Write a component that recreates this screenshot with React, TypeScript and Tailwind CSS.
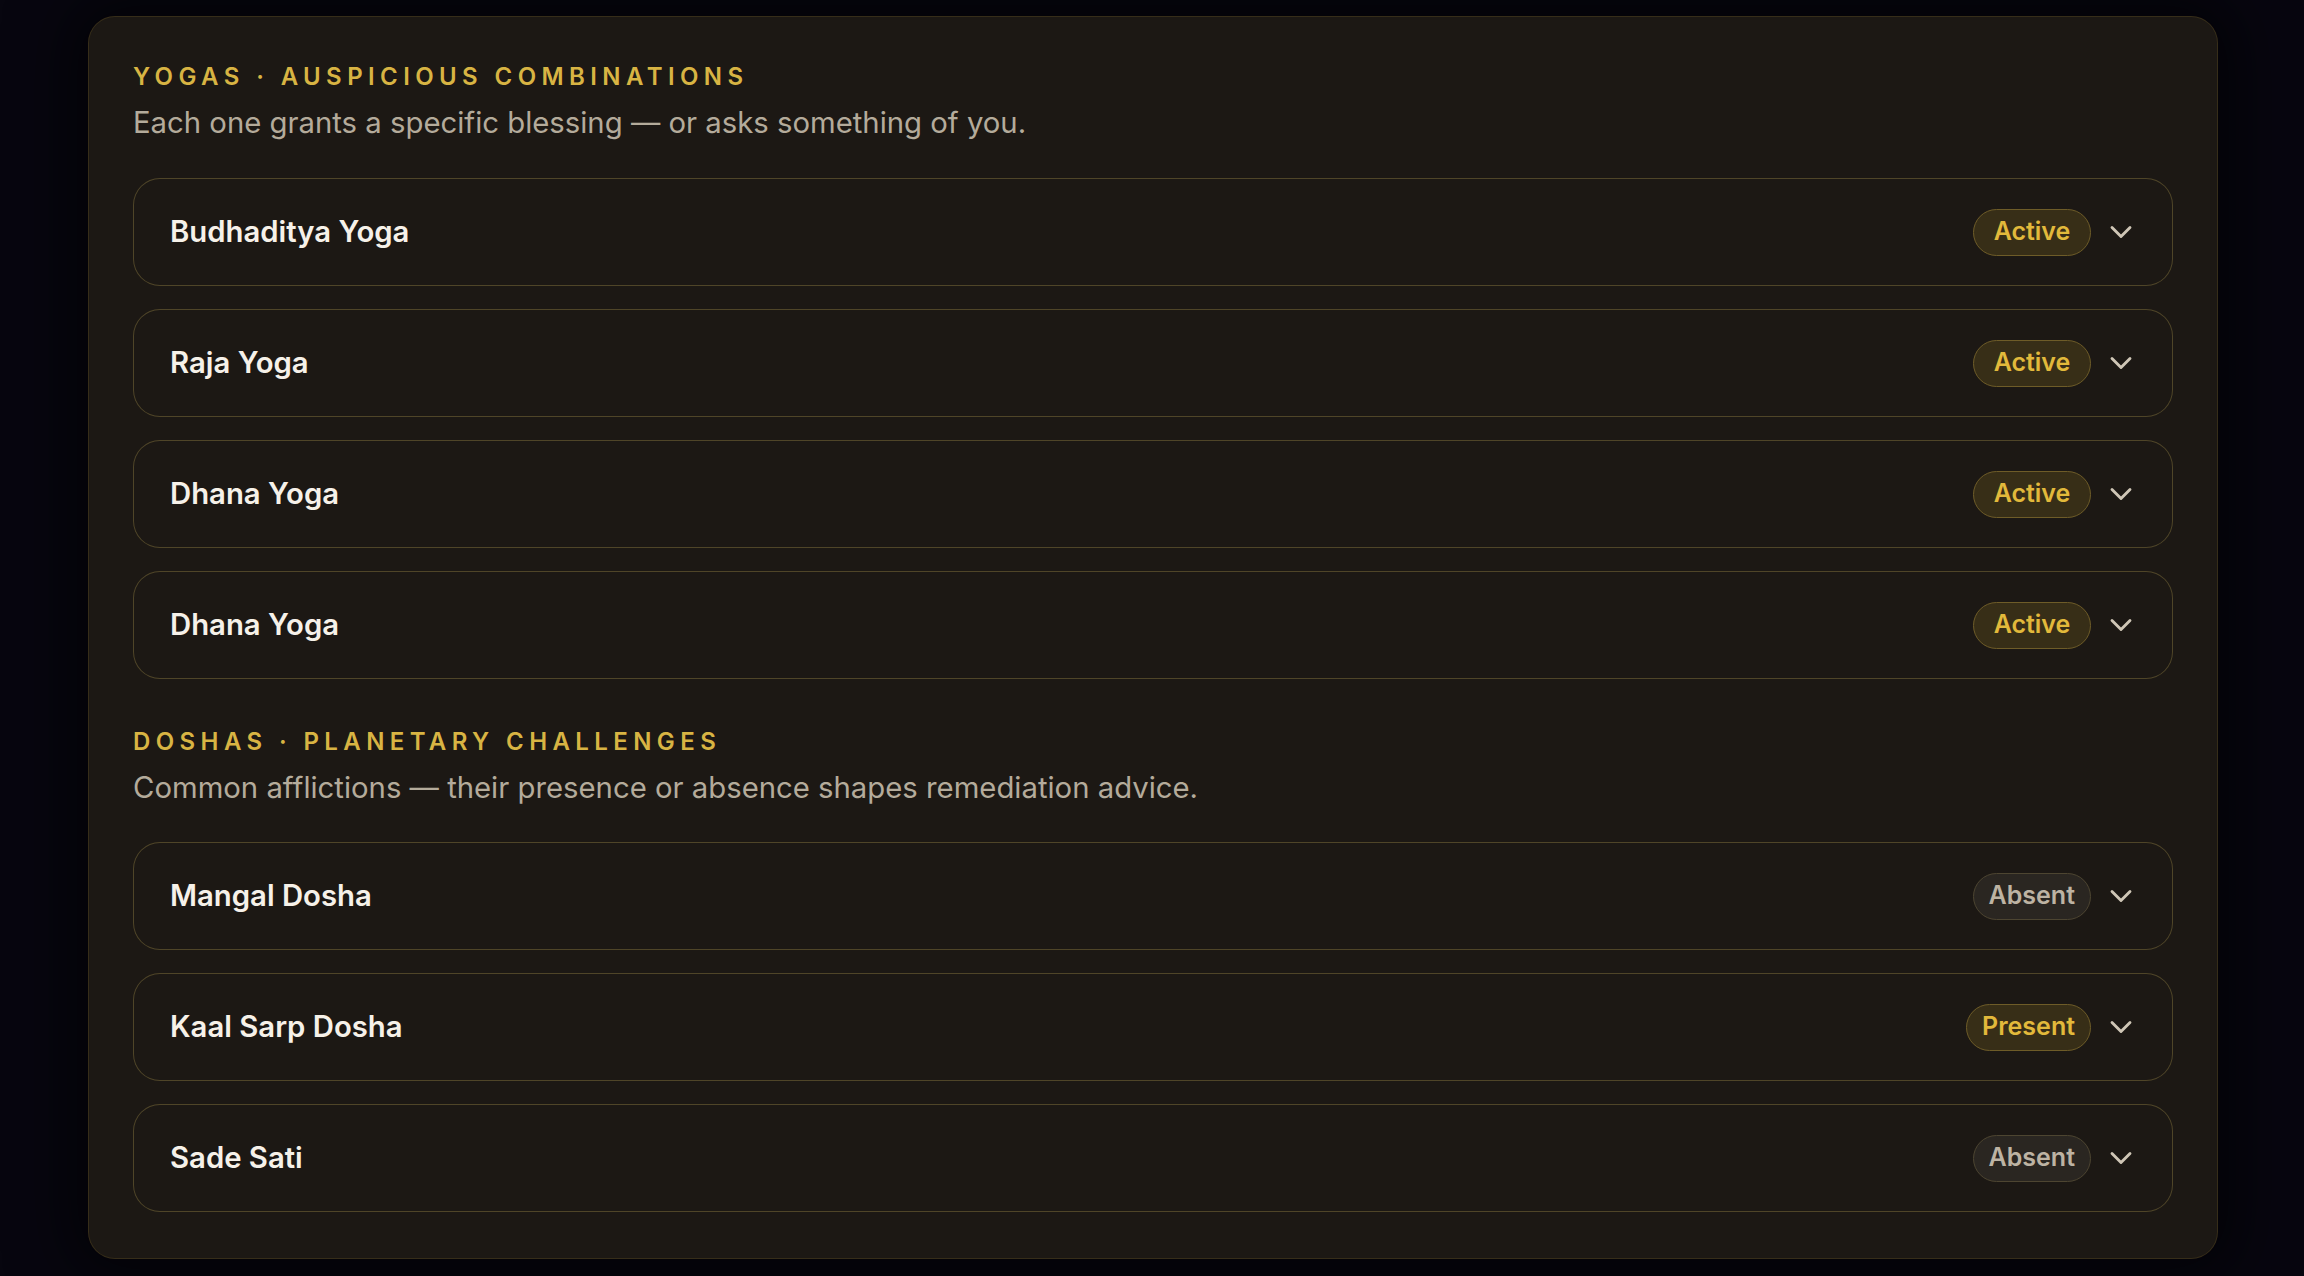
import React from "react";
import { ChevronDown } from "lucide-react";

type Status = "Active" | "Present" | "Absent";

type Item = { name: string; status: Status };

const yogas: Item[] = [
  { name: "Budhaditya Yoga", status: "Active" },
  { name: "Raja Yoga", status: "Active" },
  { name: "Dhana Yoga", status: "Active" },
  { name: "Dhana Yoga", status: "Active" },
];

const doshas: Item[] = [
  { name: "Mangal Dosha", status: "Absent" },
  { name: "Kaal Sarp Dosha", status: "Present" },
  { name: "Sade Sati", status: "Absent" },
];

function Badge({ status }: { status: Status }) {
  const lit = status !== "Absent";
  return (
    <span
      className={
        lit
          ? "flex h-[47px] min-w-[118px] items-center justify-center rounded-full border border-[#6e5c28] bg-[#372e17] px-[15px] text-[25px] font-semibold text-[#e2b93b]"
          : "flex h-[47px] min-w-[118px] items-center justify-center rounded-full border border-[#4d4531] bg-[#2a2621] px-[15px] text-[25px] font-semibold text-[#bdb3a3]"
      }
    >
      {status}
    </span>
  );
}

function Row({ item }: { item: Item }) {
  return (
    <div className="flex h-[108px] items-center justify-between rounded-[27px] border border-[rgba(200,175,90,0.3)] bg-[#1c1814] pl-[36px] pr-[33px]">
      <span className="text-[29.3px] font-semibold text-[#f6f1e9]">{item.name}</span>
      <div className="flex items-center gap-[12px]">
        <Badge status={item.status} />
        <ChevronDown size={36} strokeWidth={1.9} className="text-[#cfc6b6]" />
      </div>
    </div>
  );
}

function Section({
  title,
  blurb,
  items,
  className,
  listGap,
}: {
  title: string;
  blurb: string;
  items: Item[];
  className?: string;
  listGap: string;
}) {
  return (
    <section className={className}>
      <h2 className="text-[24px] font-semibold uppercase leading-[36px] tracking-[0.225em] text-[#d8b443]">
        {title}
      </h2>
      <p className="mt-[8px] text-[29.3px] leading-[40px] text-[#b4ab9b]">{blurb}</p>
      <div className={`flex flex-col gap-[23px] ${listGap}`}>
        {items.map((item, i) => (
          <Row key={i} item={item} />
        ))}
      </div>
    </section>
  );
}

export default function App() {
  return (
    <div
      className="min-h-screen bg-[#07060f] pb-[16px] pl-[88px] pr-[86px] pt-[16px]"
      style={{ fontFamily: "Inter, 'Noto Sans', sans-serif" }}
    >
      <div className="rounded-[27px] border border-[rgba(212,175,55,0.14)] bg-[#1c1814] px-[44px] pb-[46px] pt-[42px] shadow-[0_0_60px_20px_rgba(0,0,0,0.55)]">
        <Section
          title="Yogas · Auspicious Combinations"
          blurb="Each one grants a specific blessing — or asks something of you."
          items={yogas}
          listGap="mt-[35px]"
        />
        <Section
          className="mt-[45px]"
          title="Doshas · Planetary Challenges"
          blurb="Common afflictions — their presence or absence shapes remediation advice."
          items={doshas}
          listGap="mt-[34px]"
        />
      </div>
    </div>
  );
}
